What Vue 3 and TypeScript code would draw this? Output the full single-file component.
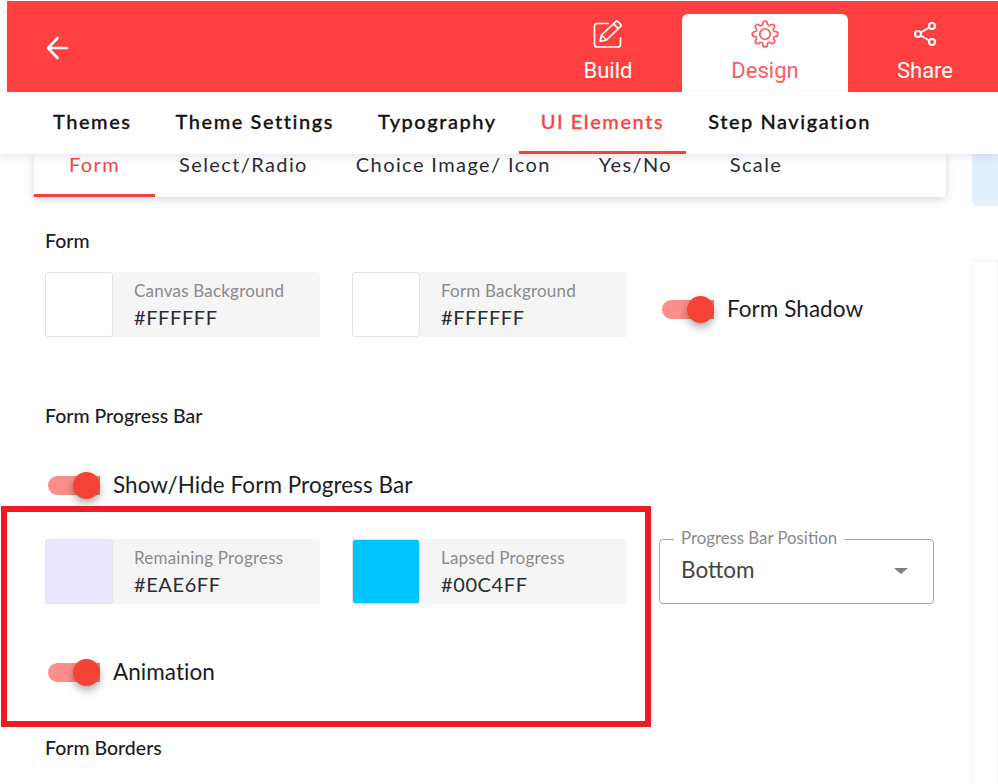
<script setup lang="ts">
const mainTabs = [
  { label: 'Themes', active: false },
  { label: 'Theme Settings', active: false },
  { label: 'Typography', active: false },
  { label: 'UI Elements', active: true },
  { label: 'Step Navigation', active: false },
]
const subTabs = ['Form', 'Select/Radio', 'Choice Image/ Icon', 'Yes/No', 'Scale']
</script>

<template>
  <div class="page">
    <header class="topbar">
      <svg class="back" width="24" height="24" viewBox="0 0 24 24" fill="none" stroke="#fff" stroke-width="2.6" stroke-linecap="round" stroke-linejoin="round">
        <path d="M22 12H3M12.500 2 3 12l9.500 10" />
      </svg>
      <nav class="modes">
        <div class="mode build">
          <svg width="30" height="28" viewBox="0 0 30 28" fill="none" stroke="#fff" stroke-width="1.7" stroke-linecap="round" stroke-linejoin="round">
            <path d="M15 3.5H4a2.5 2.5 0 0 0-2.5 2.5v18.500a2.500 2.500 0 0 0 2.500 2.500h21a2.500 2.500 0 0 0 2.500-2.500V18" />
            <path d="M7 21.500l1.500-6.500L22.500 1.800a2 2 0 0 1 2.800 0l2 2a2 2 0 0 1 0 2.800L13.500 20zM8.500 15l5 5M20.500 3.800l4.800 4.800" />
          </svg>
          <span>Build</span>
        </div>
        <div class="mode design">
          <svg width="28" height="28" viewBox="0 0 24 24" fill="none" stroke="#ff5a5f" stroke-width="1.450" stroke-linecap="round" stroke-linejoin="round">
            <circle cx="12" cy="12" r="4.500" />
            <path d="M19.400 15a1.650 1.650 0 0 0 .33 1.820l.06.06a2 2 0 0 1 0 2.830 2 2 0 0 1-2.830 0l-.06-.06a1.650 1.650 0 0 0-1.820-.33 1.650 1.650 0 0 0-1 1.510V21a2 2 0 0 1-2 2 2 2 0 0 1-2-2v-.09A1.650 1.650 0 0 0 9 19.400a1.650 1.650 0 0 0-1.820.33l-.06.06a2 2 0 0 1-2.830 0 2 2 0 0 1 0-2.830l.06-.06a1.650 1.650 0 0 0 .33-1.820 1.650 1.650 0 0 0-1.510-1H3a2 2 0 0 1-2-2 2 2 0 0 1 2-2h.09A1.650 1.650 0 0 0 4.600 9a1.650 1.650 0 0 0-.33-1.820l-.06-.06a2 2 0 0 1 0-2.830 2 2 0 0 1 2.830 0l.06.06a1.650 1.650 0 0 0 1.820.33H9a1.650 1.650 0 0 0 1-1.510V3a2 2 0 0 1 2-2 2 2 0 0 1 2 2v.09a1.650 1.650 0 0 0 1 1.510 1.650 1.650 0 0 0 1.820-.33l.06-.06a2 2 0 0 1 2.830 0 2 2 0 0 1 0 2.830l-.06.06a1.650 1.650 0 0 0-.33 1.820V9a1.650 1.650 0 0 0 1.510 1H21a2 2 0 0 1 2 2 2 2 0 0 1-2 2h-.09a1.650 1.650 0 0 0-1.510 1z" />
          </svg>
          <span>Design</span>
        </div>
        <div class="mode share">
          <svg width="28" height="28" viewBox="0 0 28 28" fill="none" stroke="#fff" stroke-width="2">
            <circle cx="21" cy="6" r="3" />
            <circle cx="7" cy="14" r="3" />
            <circle cx="21" cy="22" r="3" />
            <path d="M9.700 12.500 18.300 7.500M9.700 15.500l8.600 5" />
          </svg>
          <span>Share</span>
        </div>
      </nav>
    </header>

    <nav class="main-tabs">
      <div v-for="t in mainTabs" :key="t.label" class="main-tab" :class="{ active: t.active }">{{ t.label }}</div>
    </nav>

    <div class="body">
      <main class="content">
        <nav class="sub-tabs">
          <div v-for="(t, i) in subTabs" :key="t" class="sub-tab" :class="{ active: i === 0 }">{{ t }}</div>
        </nav>

        <div class="sections">
          <section class="sec-form">
            <h3>Form</h3>
            <div class="row">
              <div class="color-field">
                <span class="swatch"></span>
                <div class="field-body"><small>Canvas Background</small><b>#FFFFFF</b></div>
              </div>
              <div class="color-field">
                <span class="swatch"></span>
                <div class="field-body"><small>Form Background</small><b>#FFFFFF</b></div>
              </div>
              <div class="toggle-row shadow-toggle">
                <span class="toggle"><i></i></span>
                <span>Form Shadow</span>
              </div>
            </div>
          </section>

          <section class="sec-progress">
            <h3>Form Progress Bar</h3>
            <div class="toggle-row show-toggle">
              <span class="toggle"><i></i></span>
              <span>Show/Hide Form Progress Bar</span>
            </div>
            <div class="row">
              <div class="color-field">
                <span class="swatch lilac"></span>
                <div class="field-body"><small>Remaining Progress</small><b>#EAE6FF</b></div>
              </div>
              <div class="color-field">
                <span class="swatch cyan"></span>
                <div class="field-body"><small>Lapsed Progress</small><b>#00C4FF</b></div>
              </div>
              <div class="select">
                <label>Progress Bar Position</label>
                <span>Bottom</span>
                <em class="caret"></em>
              </div>
            </div>
            <div class="toggle-row anim-toggle">
              <span class="toggle"><i></i></span>
              <span>Animation</span>
            </div>
          </section>

          <section class="sec-borders">
            <h3>Form Borders</h3>
          </section>
        </div>
      </main>
      <aside class="side">
        <div class="side-note"></div>
        <div class="side-panel"></div>
      </aside>
    </div>

    <div class="highlight"></div>
  </div>
</template>

<style>
html, body { margin: 0; background: #fff; }
</style>

<style scoped>
.page {
  position: relative;
  width: 998px;
  height: 784px;
  overflow: hidden;
  background: #fff;
  font-family: Lato, "Noto Sans", sans-serif;
  color: #1c1c28;
}
.topbar {
  display: flex;
  align-items: stretch;
  justify-content: space-between;
  height: 91px;
  margin: 1px 0 0 7px;
  background: #ff4040;
}
.back { margin: 35px 0 0 38px; flex: none; }
.modes { display: flex; align-items: flex-end; margin-right: -4px; }
.mode {
  display: flex;
  flex-direction: column;
  align-items: center;
  height: 78px;
  font-family: Roboto, sans-serif;
  font-size: 22px;
  line-height: 26px;
  color: #fff;
}
.mode svg { margin-top: 6px; margin-bottom: 10px; flex: none; }
.mode.build { width: 148px; }
.mode.design { width: 166px; background: #fff; color: #ff5a5f; border-radius: 6px 6px 0 0; }
.mode.share { width: 154px; }

.main-tabs {
  position: relative;
  z-index: 2;
  display: flex;
  height: 62px;
  padding-left: 31px;
  background: #fff;
  box-shadow: 0 3px 8px rgba(60, 60, 110, 0.12);
}
.main-tab {
  padding: 0 22px;
  line-height: 59px;
  font-size: 20px;
  font-weight: 500;
  letter-spacing: 1.550px;
  -webkit-text-stroke: 0.3px currentColor;
  color: #111;
  box-sizing: border-box;
}
.main-tab.active { color: #f44545; border-bottom: 3px solid #f44336; }

.body { display: flex; height: 630px; }
.content { width: 972px; flex: none; }
.sub-tabs {
  display: flex;
  width: 912px;
  height: 43px;
  margin-left: 34px;
  background: #fff;
  box-shadow: 0 2px 8px rgba(60, 60, 110, 0.22);
}
.sub-tab {
  min-width: 120px;
  padding: 0 24px;
  box-sizing: border-box;
  text-align: center;
  font-size: 20px;
  line-height: 21px;
  letter-spacing: 1.400px;
  color: #2b2b36;
}
.sub-tab.active { color: #f44545; border-bottom: 3px solid #f44336; flex: none; min-width: 121px; }
.sections { padding-left: 45px; }
h3 {
  margin: 0;
  font-size: 19.500px;
  font-weight: 500;
  line-height: 24px;
  color: #1c1c28;
}
.sec-form { padding-top: 32px; }
.sec-form h3 { margin-bottom: 19px; }
.row { display: flex; align-items: flex-start; }
.color-field { display: flex; width: 275px; height: 65px; margin-right: 32px; flex: none; }
.swatch {
  width: 68px;
  height: 65px;
  box-sizing: border-box;
  border: 1px solid #e2e2e2;
  border-radius: 3px;
  background: #fff;
  flex: none;
}
.swatch.lilac { background: #eae6ff; }
.swatch.cyan { background: #00c4ff; }
.field-body {
  flex: 1;
  display: flex;
  flex-direction: column;
  padding: 8px 0 0 21px;
  background: #f5f5f5;
  border-radius: 0 4px 0 0;
}
.field-body small { font-size: 17px; line-height: 22px; letter-spacing: 0.2px; color: #8a8a8a; }
.field-body b { font-size: 20px; font-weight: 400; line-height: 30px; letter-spacing: 0.6px; color: #2a2a33; }
.toggle-row { display: flex; align-items: center; font-size: 22.500px; line-height: 28px; letter-spacing: 0.05px; color: #1c1c28; }
.toggle {
  position: relative;
  display: block;
  width: 52px;
  height: 19px;
  margin-right: 13px;
  flex: none;
  border-radius: 10px 0 0 10px;
  background: linear-gradient(90deg, #fb8e88 0 50%, #e0837c 100%);
}
.toggle i {
  position: absolute;
  right: 0;
  top: -4px;
  width: 27px;
  height: 27px;
  border-radius: 50%;
  background: #f44336;
  box-shadow: 0 4px 8px rgba(0, 0, 0, 0.35);
}
.shadow-toggle { margin: 23px 0 0 3px; }
.sec-progress { padding-top: 67px; }
.show-toggle { margin: 43px 0 40px 3px; }
.select {
  position: relative;
  display: flex;
  align-items: center;
  width: 275px;
  height: 65px;
  box-sizing: border-box;
  margin-left: 0;
  padding: 0 21px 4px;
  border: 1px solid #a8a8a8;
  border-radius: 4px;
  font-size: 22.500px;
  color: #444;
  flex: none;
}
.select label {
  position: absolute;
  left: 14px;
  top: -12px;
  padding: 0 7px;
  background: #fff;
  font-size: 16.800px;
  line-height: 20px;
  color: #8a8a8a;
}
.caret {
  position: absolute;
  right: 25px;
  top: 28px;
  width: 0;
  height: 0;
  border-left: 7px solid transparent;
  border-right: 7px solid transparent;
  border-top: 6px solid #808080;
}
.anim-toggle { margin: 54px 0 0 3px; }
.sec-borders { padding-top: 50px; }

.side { flex: 1; min-width: 0; }
.side-note { height: 52px; background: #e3f0fb; border-radius: 0 0 0 6px; }
.side-panel { height: 560px; margin-top: 54px; border: 1px solid #f1f1f1; box-sizing: border-box; }

.highlight {
  position: absolute;
  left: 1px;
  top: 506px;
  width: 650px;
  height: 221px;
  box-sizing: border-box;
  border: 6px solid #ed1c24;
  pointer-events: none;
}
</style>
